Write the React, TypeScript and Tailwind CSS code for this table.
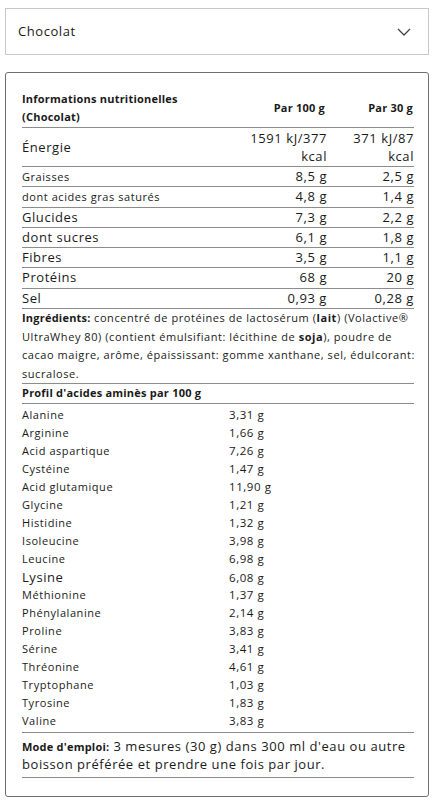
import React from "react";

const nutri: { label: string; a: string; b: string; big: boolean }[] = [
  { label: "Graisses", a: "8,5 g", b: "2,5 g", big: false },
  { label: "dont acides gras saturés", a: "4,8 g", b: "1,4 g", big: false },
  { label: "Glucides", a: "7,3 g", b: "2,2 g", big: true },
  { label: "dont sucres", a: "6,1 g", b: "1,8 g", big: true },
  { label: "Fibres", a: "3,5 g", b: "1,1 g", big: true },
  { label: "Protéins", a: "68 g", b: "20 g", big: true },
  { label: "Sel", a: "0,93 g", b: "0,28 g", big: true },
];

const amino: [string, string][] = [
  ["Alanine", "3,31 g"],
  ["Arginine", "1,66 g"],
  ["Acid aspartique", "7,26 g"],
  ["Cystéine", "1,47 g"],
  ["Acid glutamique", "11,90 g"],
  ["Glycine", "1,21 g"],
  ["Histidine", "1,32 g"],
  ["Isoleucine", "3,98 g"],
  ["Leucine", "6,98 g"],
  ["Lysine", "6,08 g"],
  ["Méthionine", "1,37 g"],
  ["Phénylalanine", "2,14 g"],
  ["Proline", "3,83 g"],
  ["Sérine", "3,41 g"],
  ["Thréonine", "4,61 g"],
  ["Tryptophane", "1,03 g"],
  ["Tyrosine", "1,83 g"],
  ["Valine", "3,83 g"],
];

export default function App() {
  return (
    <div
      className="w-[434px] h-[801px] bg-white text-[#1a1a1a] px-[5px] pt-[8px] tracking-[0.035em]"
      style={{ fontFamily: '"Open Sans", "DejaVu Sans", sans-serif' }}
    >
      <div className="h-[47px] border border-[#c8c8c8] flex items-center justify-between pl-[12px] pr-[17px]">
        <span className="text-[13px]">Chocolat</span>
        <svg width="14" height="8" viewBox="0 0 14 8" fill="none">
          <path d="M1 1l6 6 6-6" stroke="#444" strokeWidth="1.3" />
        </svg>
      </div>

      <div className="mt-[17px] h-[725px] border border-[#6e6e6e] rounded-[3px] pl-[16px] pr-[14px] pt-[17px]">
        {/* header */}
        <div className="grid grid-cols-[1fr_90px_87px] border-b border-[#8c8c8c] pb-[1px] text-[11px] font-bold leading-[18px] tracking-[0.02em]">
          <div>
            Informations nutritionelles
            <br />
            (Chocolat)
          </div>
          <div className="text-right self-center pr-[2px]">Par 100 g</div>
          <div className="text-right self-center pr-[1px]">Par 30 g</div>
        </div>

        <div className="grid grid-cols-[1fr_90px_87px] border-b border-[#8c8c8c] text-[13px] leading-[18px] py-[1px]">
          <div className="self-center">Énergie</div>
          <div className="text-right">
            1591 kJ/377
            <br />
            kcal
          </div>
          <div className="text-right">
            371 kJ/87
            <br />
            kcal
          </div>
        </div>

        {nutri.map((r) => (
          <div
            key={r.label}
            className="grid grid-cols-[1fr_90px_87px] border-b border-[#8c8c8c] h-[20.3px] items-center text-[13px]"
          >
            <div className={r.big ? "text-[13px]" : "text-[11px]"}>{r.label}</div>
            <div className="text-right">{r.a}</div>
            <div className="text-right">{r.b}</div>
          </div>
        ))}

        <div className="border-b border-[#8c8c8c] text-[11px] leading-[18.5px] whitespace-nowrap">
          <div>
            <b className="tracking-[0.02em]">Ingrédients:</b> concentré de protéines de lactosérum (<b>lait</b>) (Volactive®
          </div>
          <div>
            UltraWhey 80) (contient émulsifiant: lécithine de <b>soja</b>), poudre de
          </div>
          <div>cacao maigre, arôme, épaississant: gomme xanthane, sel, édulcorant:</div>
          <div>sucralose.</div>
        </div>

        <div className="border-b border-[#8c8c8c] h-[20px] flex items-center text-[11px] font-bold tracking-[0.02em]">
          Profil d'acides aminès par 100 g
        </div>

        <div className="pt-[2px] pb-[2px] border-b border-[#8c8c8c]">
          {amino.map(([n, v]) => (
            <div key={n} className="grid grid-cols-[207px_1fr] h-[18px] items-center">
              <div className={n === "Lysine" ? "text-[13px]" : "text-[11px]"}>{n}</div>
              <div className="text-[11.5px]">{v}</div>
            </div>
          ))}
        </div>

        <div className="border-b border-[#8c8c8c] text-[13px] pt-[5px] pb-[3px] whitespace-nowrap">
          <div className="h-[18px] flex items-center">
            <b className="text-[11px] tracking-[0.02em] mr-[4px]">Mode d'emploi:</b>3 mesures (30 g) dans 300 ml d'eau ou autre
          </div>
          <div className="h-[18px] flex items-center">boisson préférée et prendre une fois par jour.</div>
        </div>
      </div>
    </div>
  );
}
